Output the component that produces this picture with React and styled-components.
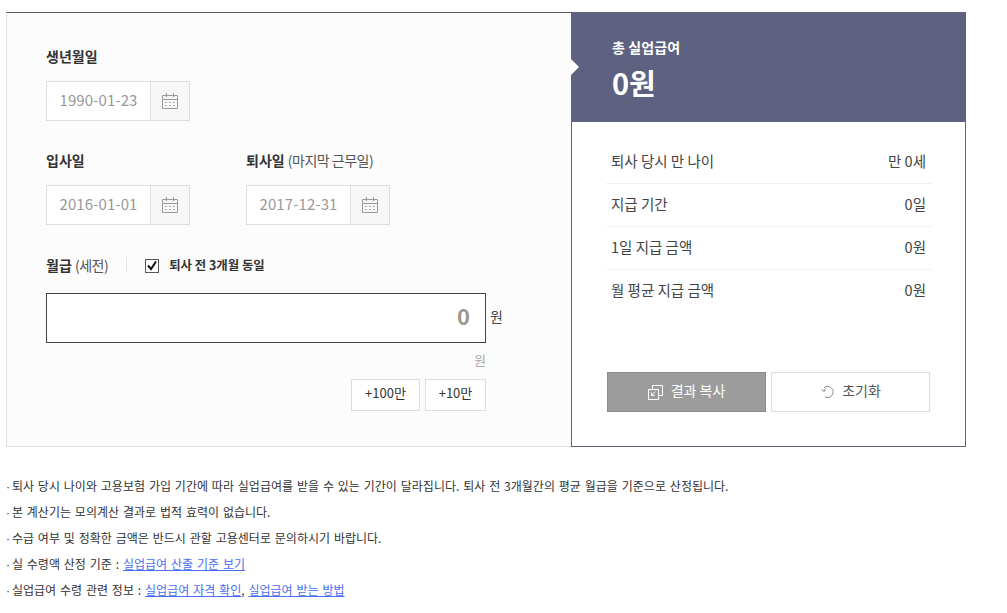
import React, { useState } from 'react';
import styled, { createGlobalStyle } from 'styled-components';

const Global = createGlobalStyle`
    * { box-sizing: border-box; }
    body {
        margin: 0;
        background: #fff;
        color: #333;
        font-family: 'Noto Sans CJK KR', 'Noto Sans', sans-serif;
    }
`;

const Page = styled.div`
    width: 960px;
    margin: 12px 0 0 6px;
`;
const Calc = styled.div`
    display: flex;
    height: 435px;
`;
const Form = styled.div`
    width: 565px;
    padding: 27px 39px 0 39px;
    background: #fcfcfc;
    border: 1px solid #ddd;
    border-top-color: #5a5a5a;
    border-right: none;
`;
const Row = styled.div`
    display: flex;
    gap: 56px;
    margin-bottom: ${props => props.$mb || 23}px;
`;
const Label = styled.div`
    height: 41px;
    padding-top: 6px;
    font-size: 14px;
    line-height: 20px;
    font-weight: 700;
    color: #333;
    small {
        font-size: 14px;
        font-weight: 400;
        color: #555;
        letter-spacing: -0.5px;
    }
`;
const DateBox = styled.div`
    display: flex;
    width: 144px;
    height: 40px;
    background: #fff;
    border: 1px solid #ddd;
`;
const DateText = styled.div`
    flex: 1;
    text-align: center;
    font-size: 15px;
    line-height: 35px;
    color: #999;
    letter-spacing: 0.1px;
`;
const CalBtn = styled.div`
    width: 39px;
    display: flex;
    align-items: center;
    justify-content: center;
    background: #f7f7f7;
    border-left: 1px solid #ddd;
`;
const SalaryHead = styled.div`
    display: flex;
    align-items: center;
    height: 28px;
`;
const SalaryLabel = styled(Label)`
    height: auto;
    padding-top: 0;
    padding-right: 18px;
    margin-right: 18px;
    border-right: 1px solid #e4e4e4;
    line-height: 16px;
`;
const Check = styled.label`
    display: flex;
    align-items: center;
    gap: 10px;
    font-size: 12.4px;
    font-weight: 700;
    color: #333;
`;
const Box = styled.span`
    width: 14px;
    height: 14px;
    display: flex;
    margin-top: 2px;
    background: #fff;
    border: 1px solid #555;
`;
const AmountRow = styled.div`
    display: flex;
    align-items: center;
    gap: 4px;
    margin-top: 14px;
`;
const Amount = styled.div`
    width: 440px;
    height: 50px;
    padding-right: 15px;
    text-align: right;
    font-size: 22px;
    line-height: 42px;
    font-weight: 700;
    color: #9a9a8e;
    background: #fff;
    border: 1px solid #444;
`;
const Unit = styled.span`
    padding-bottom: 5px;
    font-size: 14px;
    color: #444;
`;
const SubUnit = styled.div`
    width: 440px;
    height: 36px;
    padding-top: 7px;
    text-align: right;
    font-size: 13px;
    line-height: 20px;
    color: #aaa;
`;
const Quick = styled.div`
    display: flex;
    justify-content: flex-end;
    gap: 5px;
    width: 440px;
`;
const QuickBtn = styled.button`
    width: ${props => props.$w}px;
    height: 32px;
    padding: 0 0 6px;
    font-family: inherit;
    font-size: 13px;
    color: #333;
    background: #fff;
    border: 1px solid #ddd;
`;
const Result = styled.div`
    width: 395px;
    display: flex;
    flex-direction: column;
    background: #fff;
    border: 1px solid #5e6180;
    border-top: none;
`;
const Total = styled.div`
    position: relative;
    height: 110px;
    margin: 0 -1px;
    padding: 25px 0 0 41px;
    background: #5e6180;
    color: #fff;
`;
const Notch = styled.span`
    position: absolute;
    left: 0;
    top: 47px;
    width: 0;
    height: 0;
    border-style: solid;
    border-width: 8px 0 8px 8px;
    border-color: transparent transparent transparent #fff;
`;
const TotalLabel = styled.div`
    font-size: 14px;
    line-height: 20px;
    font-weight: 700;
    letter-spacing: 0.1px;
`;
const TotalValue = styled.div`
    margin-top: 5px;
    font-size: 29px;
    line-height: 40px;
    font-weight: 700;
`;
const List = styled.div`
    margin: 19px 33px 0 34px;
    height: 231px;
`;
const Item = styled.div`
    display: flex;
    justify-content: space-between;
    height: 43px;
    padding: 0 6px 0 5px;
    font-size: 14.5px;
    line-height: 40px;
    color: #444;
    border-bottom: ${props => (props.$last ? 'none' : '1px solid #f0f0f0')};
`;
const Actions = styled.div`
    display: flex;
    gap: 5px;
    margin-left: 35px;
`;
const Action = styled.button`
    width: 159px;
    height: 40px;
    display: flex;
    align-items: center;
    justify-content: center;
    gap: 8px;
    padding: 0 0 5px;
    font-family: inherit;
    font-size: 14px;
    color: ${props => (props.$dark ? '#fff' : '#555')};
    background: ${props => (props.$dark ? '#9c9c9c' : '#fff')};
    border: 1px solid ${props => (props.$dark ? '#8e8e8e' : '#ddd')};
    svg {
        margin-top: 5px;
    }
`;
const Notes = styled.ul`
    list-style: none;
    margin: 26px 0 0;
    padding: 0;
`;
const Note = styled.li`
    height: 26px;
    font-size: 12px;
    line-height: 26px;
    word-spacing: 1.2px;
    color: #333;
    a {
        color: #4a6ef5;
        text-decoration: underline;
    }
`;
const Dot = styled.span`
    margin-right: -2px;
    font-family: 'Liberation Sans', sans-serif;
`;

const CalendarIcon = () => (
    <svg width="16" height="16" viewBox="0 0 16 16" fill="none" stroke="#999">
        <path d="M.5 2.5h15v13H.5zM.5 6.5h15M4.5 0v4M11.5 0v4" />
        <path d="M3 9.5h2M7 9.5h2M11 9.5h2M3 12.5h2M7 12.5h2M11 12.5h2" strokeDasharray="1.5 .7" />
    </svg>
);
const CheckMark = () => (
    <svg width="12" height="12" viewBox="0 0 12 12" fill="none" stroke="#111" strokeWidth="2">
        <path d="M2 5.5l3 3.5 5-7.5" />
    </svg>
);
const CopyIcon = () => (
    <svg width="15" height="15" viewBox="0 0 15 15" fill="none" stroke="#fff">
        <path d="M.5 4.5h10v10H.5zM4.5 4V.5h10v10H11M7.5 6.5l-4 4M3.5 7.5v3h3" />
    </svg>
);
const ResetIcon = () => (
    <svg width="14" height="14" viewBox="0 0 14 14" fill="none" stroke="#888">
        <path d="M4 2.7A5.5 5.5 0 1 1 5 11.8M1.5 4.5l2.8 2 1.2-3" />
    </svg>
);

const DateField = ({ value }) => (
    <DateBox>
        <DateText>{value}</DateText>
        <CalBtn><CalendarIcon /></CalBtn>
    </DateBox>
);

const results = [
    ['퇴사 당시 만 나이', '만 0세'],
    ['지급 기간', '0일'],
    ['1일 지급 금액', '0원'],
    ['월 평균 지급 금액', '0원'],
];

const App = () => {
    const [same] = useState(true);
    return (
        <Page>
            <Global />
            <Calc>
                <Form>
                    <Row>
                        <div>
                            <Label>생년월일</Label>
                            <DateField value="1990-01-23" />
                        </div>
                    </Row>
                    <Row $mb={26}>
                        <div>
                            <Label>입사일</Label>
                            <DateField value="2016-01-01" />
                        </div>
                        <div>
                            <Label>퇴사일 <small>(마지막 근무일)</small></Label>
                            <DateField value="2017-12-31" />
                        </div>
                    </Row>
                    <SalaryHead>
                        <SalaryLabel>월급 <small>(세전)</small></SalaryLabel>
                        <Check>
                            <Box>{same && <CheckMark />}</Box>
                            퇴사 전 3개월 동일
                        </Check>
                    </SalaryHead>
                    <AmountRow>
                        <Amount>0</Amount>
                        <Unit>원</Unit>
                    </AmountRow>
                    <SubUnit>원</SubUnit>
                    <Quick>
                        <QuickBtn $w={69}>+100만</QuickBtn>
                        <QuickBtn $w={61}>+10만</QuickBtn>
                    </Quick>
                </Form>
                <Result>
                    <Total>
                        <Notch />
                        <TotalLabel>총 실업급여</TotalLabel>
                        <TotalValue>0원</TotalValue>
                    </Total>
                    <List>
                        {results.map(([name, value], i) => (
                            <Item key={name} $last={i === results.length - 1}>
                                <span>{name}</span>
                                <span>{value}</span>
                            </Item>
                        ))}
                    </List>
                    <Actions>
                        <Action $dark><CopyIcon /> 결과 복사</Action>
                        <Action><ResetIcon /> 초기화</Action>
                    </Actions>
                </Result>
            </Calc>
            <Notes>
                <Note><Dot>·</Dot> 퇴사 당시 나이와 고용보험 가입 기간에 따라 실업급여를 받을 수 있는 기간이 달라집니다. 퇴사 전 3개월간의 평균 월급을 기준으로 산정됩니다.</Note>
                <Note><Dot>·</Dot> 본 계산기는 모의계산 결과로 법적 효력이 없습니다.</Note>
                <Note><Dot>·</Dot> 수급 여부 및 정확한 금액은 반드시 관할 고용센터로 문의하시기 바랍니다.</Note>
                <Note><Dot>·</Dot> 실 수령액 산정 기준 : <a href="#a">실업급여 산출 기준 보기</a></Note>
                <Note><Dot>·</Dot> 실업급여 수령 관련 정보 : <a href="#b">실업급여 자격 확인</a>, <a href="#c">실업급여 받는 방법</a></Note>
            </Notes>
        </Page>
    );
};

export default App;
